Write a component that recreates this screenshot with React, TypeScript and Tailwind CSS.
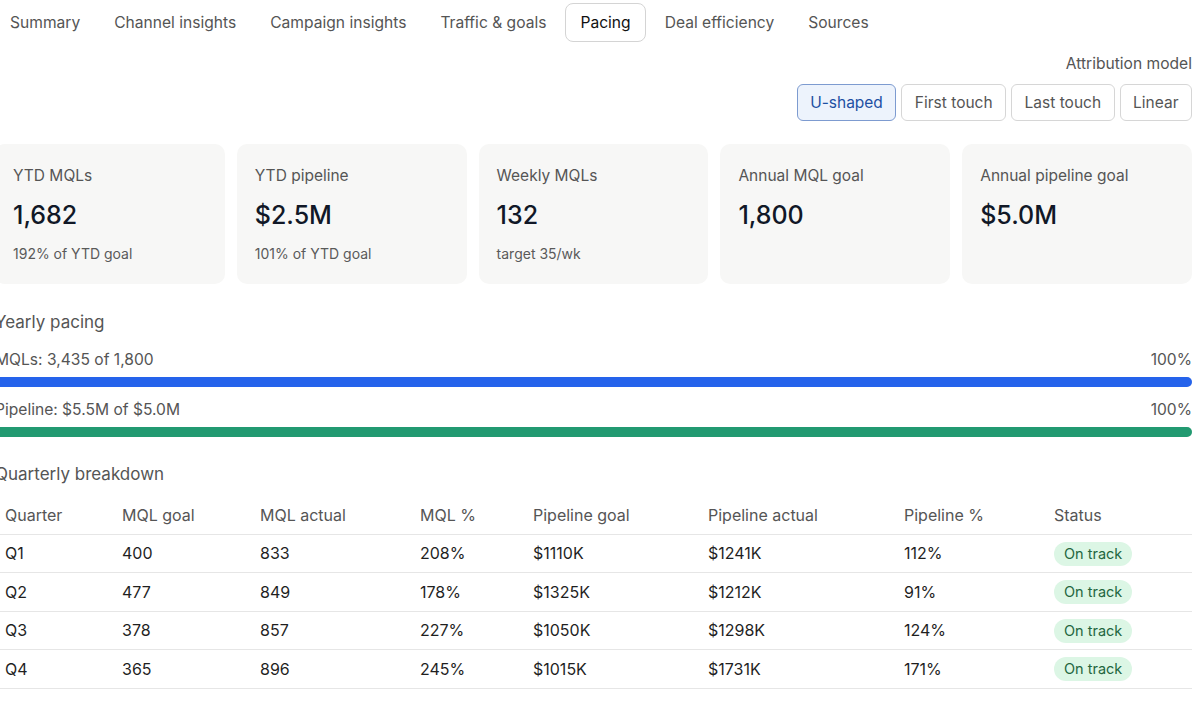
import React from "react";

const tabs = [
  "Summary",
  "Channel insights",
  "Campaign insights",
  "Traffic & goals",
  "Pacing",
  "Deal efficiency",
  "Sources",
];

const models = ["U-shaped", "First touch", "Last touch", "Linear"];

const stats = [
  { label: "YTD MQLs", value: "1,682", sub: "192% of YTD goal" },
  { label: "YTD pipeline", value: "$2.5M", sub: "101% of YTD goal" },
  { label: "Weekly MQLs", value: "132", sub: "target 35/wk" },
  { label: "Annual MQL goal", value: "1,800", sub: "" },
  { label: "Annual pipeline goal", value: "$5.0M", sub: "" },
];

const rows = [
  ["Q1", "400", "833", "208%", "$1110K", "$1241K", "112%"],
  ["Q2", "477", "849", "178%", "$1325K", "$1212K", "91%"],
  ["Q3", "378", "857", "227%", "$1050K", "$1298K", "124%"],
  ["Q4", "365", "896", "245%", "$1015K", "$1731K", "171%"],
];

const headers = [
  "Quarter",
  "MQL goal",
  "MQL actual",
  "MQL %",
  "Pipeline goal",
  "Pipeline actual",
  "Pipeline %",
  "Status",
];

const colWidths = ["w-[117px]", "w-[138px]", "w-[160px]", "w-[113px]", "w-[175px]", "w-[196px]", "w-[150px]", "w-[148px]"];

function PacingBar({ label, pct, color }: { label: string; pct: string; color: string }) {
  return (
    <div>
      <div className="flex justify-between text-[15.6px] leading-[22px] text-[#555]">
        <span>{label}</span>
        <span>{pct}</span>
      </div>
      <div className="mt-[6px] h-[10px] w-full rounded-full bg-[#ececec]">
        <div className={`h-full w-full rounded-full ${color}`} />
      </div>
    </div>
  );
}

export default function App() {
  return (
    <div className="w-[1200px] overflow-hidden bg-white">
      <div
        className="-ml-[5px] w-[1197px] text-[#222]"
        style={{ fontFamily: "Inter, 'Noto Sans', sans-serif" }}
      >
        {/* tab strip */}
        <div className="mt-[3px] flex gap-1">
          {tabs.map((t) => (
            <button
              key={t}
              className={
                t === "Pacing"
                  ? "h-[39px] rounded-lg border border-[#d4d4d4] bg-white px-[14px] text-[15.6px] text-[#111]"
                  : "h-[39px] rounded-lg border border-transparent px-[14px] text-[15.6px] text-[#555]"
              }
            >
              {t}
            </button>
          ))}
        </div>

        {/* attribution picker */}
        <div className="mt-[10px] flex flex-col items-end">
          <div className="text-[15.6px] leading-[24px] text-[#555]">Attribution model</div>
          <div className="mt-2 flex gap-[5px]">
            {models.map((m) => (
              <button
                key={m}
                className={
                  m === "U-shaped"
                    ? "h-[37px] rounded-md border border-[#7d9bd0] bg-[#edf3fc] px-[12.5px] text-[15.5px] text-[#1d4fa3]"
                    : "h-[37px] rounded-md border border-[#d6d6d6] bg-white px-[12.5px] text-[15.5px] text-[#555]"
                }
              >
                {m}
              </button>
            ))}
          </div>
        </div>

        {/* headline numbers */}
        <div className="mt-[23px] grid grid-cols-5 gap-3">
          {stats.map((s) => (
            <div key={s.label} className="h-[140px] rounded-[10px] bg-[#f7f7f6] px-[18px] pt-[21px]">
              <div className="text-[15.5px] leading-[22px] text-[#555]">{s.label}</div>
              <div className="mt-3 text-[25px] font-medium leading-[32px] text-[#111827]">{s.value}</div>
              {s.sub && <div className="mt-[13px] text-[14px] leading-[20px] text-[#5a5a5a]">{s.sub}</div>}
            </div>
          ))}
        </div>

        {/* yearly pacing */}
        <div className="mt-[26px] text-[17px] leading-[24px] text-[#555]">Yearly pacing</div>
        <div className="mt-[15px]">
          <PacingBar label="MQLs: 3,435 of 1,800" pct="100%" color="bg-[#2563eb]" />
        </div>
        <div className="mt-3">
          <PacingBar label="Pipeline: $5.5M of $5.0M" pct="100%" color="bg-[#229a71]" />
        </div>

        {/* quarterly table */}
        <div className="mt-[25px] text-[17px] leading-[24px] text-[#555]">Quarterly breakdown</div>
        <table className="mt-[10px] w-full table-fixed border-collapse text-left text-[16px]">
          <thead>
            <tr className="h-[38px] border-b border-[#e6e6e6]">
              {headers.map((h, i) => (
                <th key={h} className={`${colWidths[i]} px-[10px] font-normal text-[#555]`}>
                  {h}
                </th>
              ))}
            </tr>
          </thead>
          <tbody>
            {rows.map((r) => (
              <tr key={r[0]} className="h-[38.5px] border-b border-[#e6e6e6]">
                {r.map((c, i) => (
                  <td key={i} className="px-[10px] text-[#1f1f1f]">
                    {c}
                  </td>
                ))}
                <td className="px-[10px]">
                  <span className="inline-block rounded-full bg-[#dcf6e5] px-[10px] py-[2px] text-[14.5px] leading-[20px] text-[#23663f]">
                    On track
                  </span>
                </td>
              </tr>
            ))}
          </tbody>
        </table>
      </div>
    </div>
  );
}
